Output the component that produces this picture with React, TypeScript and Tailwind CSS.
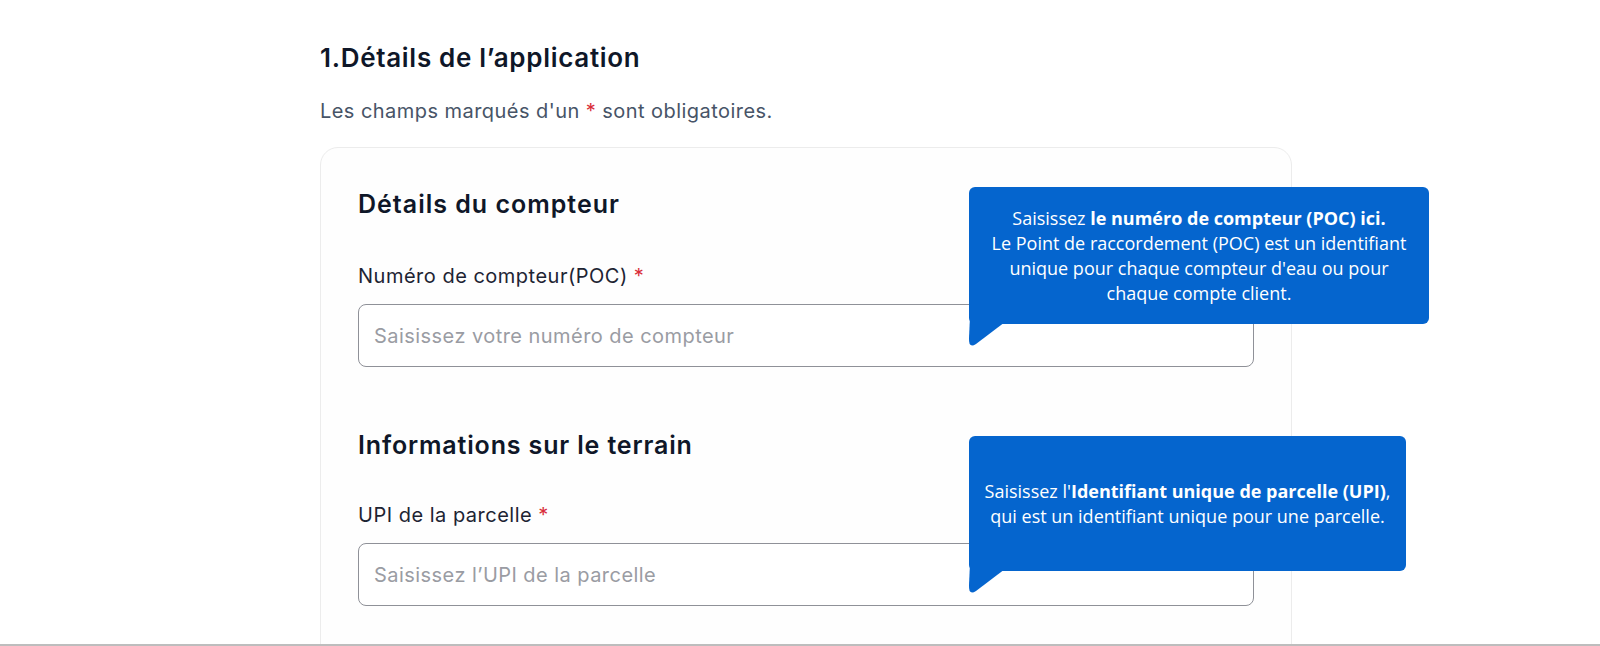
import React from 'react';

const Tail = () => (
  <svg
    className="absolute left-[-6px] top-[calc(100%-8px)]"
    width="42"
    height="34"
    viewBox="0 0 42 34"
  >
    <path d="M7 0 L6 22 Q5.5 33 13 28 L42 6 L42 0 Z" fill="#0565CE" />
  </svg>
);

const Field = ({ label, placeholder }: { label: string; placeholder: string }) => (
  <div className="flex flex-col">
    <label className="text-[20px] leading-[28px] text-[#1d2433] tracking-[0.5px]">
      {label} <span className="text-[#d92d3a]">*</span>
    </label>
    <input
      placeholder={placeholder}
      className="mt-[14px] h-[63px] w-full rounded-[8px] border border-[#8f9198] bg-white px-[15px] text-[20px] tracking-[0.45px] text-[#1d2433] placeholder:text-[#9a9ca3] outline-none"
    />
  </div>
);

export default function App() {
  return (
    <div
      className="relative h-[646px] overflow-hidden border-b-2 border-[#bdbdbd] bg-white"
      style={{ fontFamily: 'Inter, "Noto Sans", sans-serif' }}
    >
      <div className="pl-[320px] pt-[42px]">
        <h1 className="text-[26px] leading-[32px] font-semibold text-[#0f1728] tracking-[0.7px]">
          1.Détails de l’application
        </h1>
        <p className="mt-[23px] text-[20px] leading-[28px] text-[#475467] tracking-[0.45px]">
          Les champs marqués d'un <span className="text-[#d92d3a]">*</span> sont obligatoires.
        </p>

        <div className="mt-[22px] w-[972px] h-[600px] rounded-[18px] border border-[#ececec] bg-[#fefefe] px-[37px] pt-[40px]">
          <h2 className="text-[25px] leading-[32px] font-semibold text-[#0f1728] tracking-[1px]">
            Détails du compteur
          </h2>
          <div className="mt-[42px]">
            <Field label="Numéro de compteur(POC)" placeholder="Saisissez votre numéro de compteur" />
          </div>

          <h2 className="mt-[62px] text-[25px] leading-[32px] font-semibold text-[#0f1728] tracking-[0.85px]">
            Informations sur le terrain
          </h2>
          <div className="mt-[40px]">
            <Field label="UPI de la parcelle" placeholder="Saisissez l’UPI de la parcelle" />
          </div>
        </div>
      </div>

      {/* tooltips */}
      <div
        className="absolute left-[969px] top-[187px] w-[460px] h-[137px] rounded-[6px] bg-[#0565CE] flex items-center justify-center text-center text-white text-[18px] leading-[25px]"
        style={{ fontFamily: '"Open Sans", "Noto Sans", sans-serif' }}
      >
        <Tail />
        <p className="relative">
          Saisissez <b>le numéro de compteur (POC) ici.</b>
          <br />
          Le Point de raccordement (POC) est un identifiant
          <br />
          unique pour chaque compteur d'eau ou pour
          <br />
          chaque compte client.
        </p>
      </div>

      <div
        className="absolute left-[969px] top-[436px] w-[437px] h-[135px] rounded-[6px] bg-[#0565CE] flex items-center justify-center text-center text-white text-[18px] leading-[25px]"
        style={{ fontFamily: '"Open Sans", "Noto Sans", sans-serif' }}
      >
        <Tail />
        <p className="relative">
          Saisissez l'<b>Identifiant unique de parcelle (UPI)</b>,
          <br />
          qui est un identifiant unique pour une parcelle.
        </p>
      </div>
    </div>
  );
}
